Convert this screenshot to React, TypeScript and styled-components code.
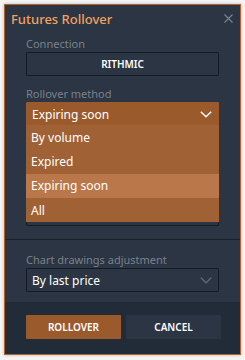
import React from "react";
import styled, { createGlobalStyle } from "styled-components";

const Global = createGlobalStyle`
  html, body { margin: 0; padding: 0; background: #f4f4f4; }
  body { font-family: "Noto Sans", "Open Sans", sans-serif; }
  * { box-sizing: border-box; }
`;

const Page = styled.div`
  padding: 4px;
  width: 245px;
  height: 360px;
`;

const Dialog = styled.div`
  width: 237px;
  height: 351px;
  border: 1px solid #b4612b;
  background: #2b3543;
  display: flex;
  flex-direction: column;
  box-shadow: 0 0 3px rgba(0, 0, 0, 0.25);
`;

const Header = styled.div`
  height: 27px;
  display: flex;
  align-items: center;
  justify-content: space-between;
  padding: 0 7px 0 6px;
`;

const Title = styled.div`
  color: #f4a160;
  font-size: 13px;
  font-weight: 500;
`;

const Close = styled.svg`
  width: 9px;
  height: 9px;
`;

const Section = styled.div<{ $top: number; $bottom: number }>`
  padding: ${(p) => p.$top}px 21px ${(p) => p.$bottom}px 21px;
  display: flex;
  flex-direction: column;
  gap: 10px;
  position: relative;
`;

const Field = styled.div`
  display: flex;
  flex-direction: column;
`;

const Label = styled.div`
  color: #79818b;
  font-size: 11px;
  height: 16px;
  line-height: 15px;
`;

const Box = styled.div<{ $active?: boolean; $center?: boolean; $bold?: boolean }>`
  height: 24px;
  border: 1px solid ${(p) => (p.$active ? "#9a5a2c" : "#151c26")};
  border-radius: 1px;
  background: ${(p) => (p.$active ? "#9a5a2c" : "#2b3543")};
  color: #ffffff;
  font-size: ${(p) => (p.$bold ? "10px" : "12px")};
  font-weight: ${(p) => (p.$bold ? 600 : 400)};
  display: flex;
  align-items: center;
  justify-content: ${(p) => (p.$center ? "center" : "space-between")};
  padding: 0 5px 0 5px;
`;

const Chevron = styled.svg`
  width: 12px;
  height: 7px;
  margin-right: 1px;
`;

const Menu = styled.div`
  position: absolute;
  left: 21px;
  right: 21px;
  top: 93px;
  background: #a06235;
  display: flex;
  flex-direction: column;
  z-index: 2;
`;

const Item = styled.div<{ $hl?: boolean }>`
  height: 24.3px;
  display: flex;
  align-items: center;
  padding-left: 5px;
  color: #ffffff;
  font-size: 12px;
  background: ${(p) => (p.$hl ? "#b9774a" : "transparent")};
`;

const Divider = styled.div`
  height: 1px;
  background: #18202b;
`;

const Footer = styled.div`
  margin-top: auto;
  background: #222c38;
  height: 52px;
  display: flex;
  gap: 5px;
  padding: 13px 0 0 21px;
`;

const Button = styled.button<{ $primary?: boolean }>`
  width: 95px;
  height: 24px;
  border: none;
  border-radius: 1px;
  background: ${(p) => (p.$primary ? "#9a5a2c" : "#2b3543")};
  color: #ffffff;
  font-family: inherit;
  font-size: 10px;
  font-weight: 600;
  padding: 0;
`;

const Down = ({ color }: { color: string }) => (
  <Chevron viewBox="0 0 12 7">
    <path d="M0.8 0.8 L6 5.8 L11.2 0.8" fill="none" stroke={color} strokeWidth="1.4" />
  </Chevron>
);

export default function App() {
  return (
    <Page>
      <Global />
      <Dialog>
        <Header>
          <Title>Futures Rollover</Title>
          <Close viewBox="0 0 9 9">
            <path d="M0.5 0.5 L8.5 8.5 M8.5 0.5 L0.5 8.5" stroke="#7c838c" strokeWidth="1.1" />
          </Close>
        </Header>
        <Section $top={4} $bottom={13}>
          <Field>
            <Label>Connection</Label>
            <Box $center $bold>RITHMIC</Box>
          </Field>
          <Field>
            <Label>Rollover method</Label>
            <Box $active>
              <span>Expiring soon</span>
              <Down color="#ffffff" />
            </Box>
          </Field>
          <Field>
            <Label />
            <Box />
          </Field>
          <Field>
            <Label />
            <Box />
          </Field>
          <Menu>
            <Item>By volume</Item>
            <Item>Expired</Item>
            <Item $hl>Expiring soon</Item>
            <Item>All</Item>
          </Menu>
        </Section>
        <Divider />
        <Section $top={12} $bottom={0}>
          <Field>
            <Label>Chart drawings adjustment</Label>
            <Box>
              <span>By last price</span>
              <Down color="#5f6873" />
            </Box>
          </Field>
        </Section>
        <Footer>
          <Button $primary>ROLLOVER</Button>
          <Button>CANCEL</Button>
        </Footer>
      </Dialog>
    </Page>
  );
}
